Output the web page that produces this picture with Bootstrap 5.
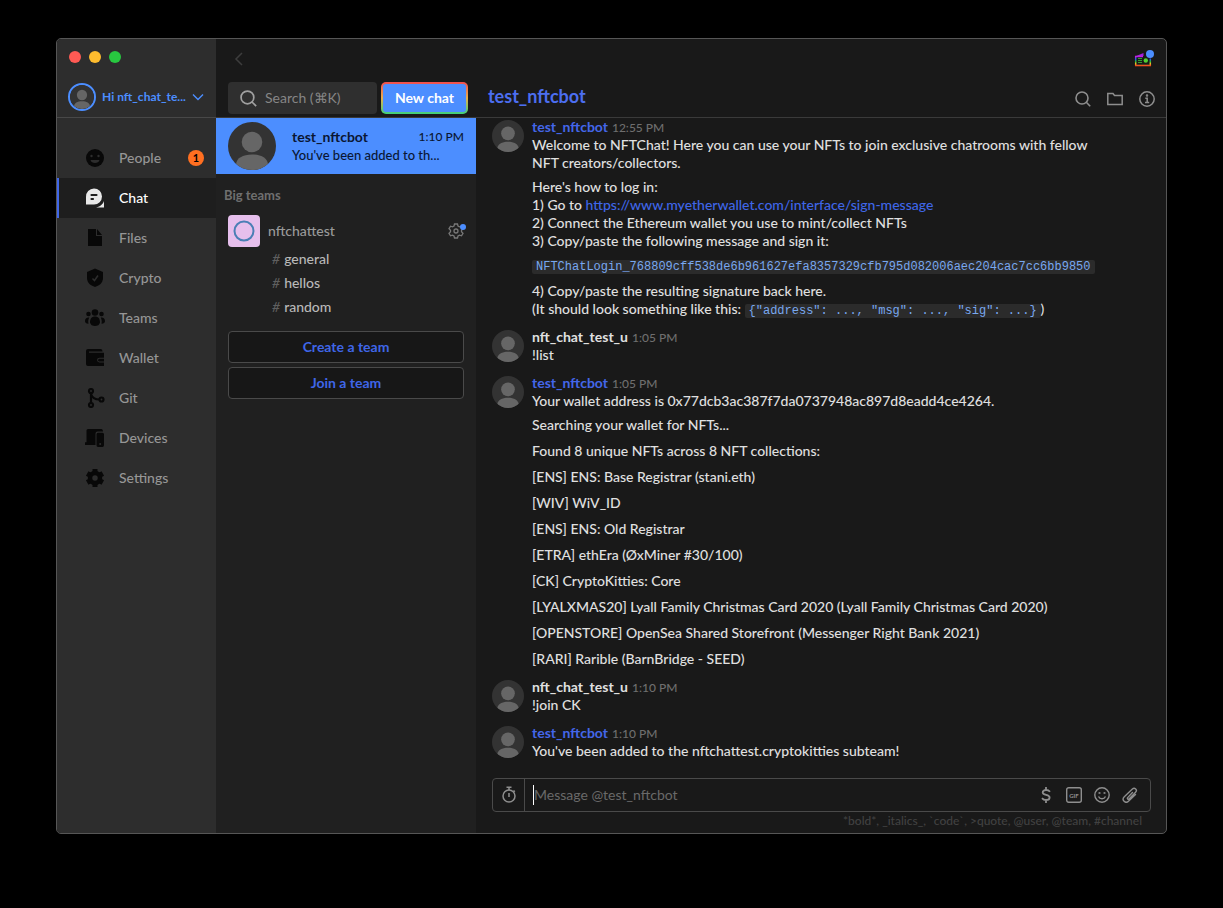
<!DOCTYPE html>
<html lang="en" data-bs-theme="dark">
<head>
<meta charset="utf-8">
<meta name="viewport" content="width=device-width, initial-scale=1">
<title>Chat – test_nftcbot</title>
<link href="https://cdn.jsdelivr.net/npm/bootstrap@5.3.0/dist/css/bootstrap.min.css" rel="stylesheet">
<style>
  :root { --blue: #4c8eff; --deep-blue: #3f66e8; --line: #3a3a3a; --ink: #e0e0e0; --muted: #6e6e6e; --panel: #191919; }
  body { background: #000; color: var(--ink); font: 500 14px/18px Lato, "Liberation Sans", sans-serif; padding: 38px 56px 74px; }
  a { text-decoration: none; }
  .app-window { border: 1px solid #565656; border-radius: 5px; background: var(--panel); }
  .icon-btn { background: none; border: 0; padding: 0; color: #8e8e8e; display: flex; }
  .defs { width: 0; height: 0; }

  /* Left navigation */
  .side { width: 159px; background: #2d2d2d; }
  .side-top { height: 79px; border-bottom: 1px solid #484848; padding: 12px 11px 0; }
  .dot { width: 12px; height: 12px; border-radius: 50%; }
  .dots { gap: 8px; margin-left: 1px; }
  .user-btn { color: var(--blue); font-size: 12px; font-weight: 700; margin-top: 20px; gap: 6px; line-height: 16px; }
  .me { width: 28px; height: 28px; border: 2px solid var(--blue); border-radius: 50%; }
  .side-nav { padding-top: 20px; }
  .side-nav a { height: 40px; color: #969696; font-weight: 500; padding: 0 12px 0 28px; gap: 14px; }
  .side-nav a svg { width: 20px; height: 20px; color: #080808; }
  .side-nav a.active { background: #1e1e1e; color: #fff; box-shadow: inset 2px 0 var(--deep-blue); }
  .side-nav a.active svg { color: #e8e8e8; }
  .count { width: 16px; height: 16px; border-radius: 50%; background: #ff6f21; color: #000; font-size: 11px; line-height: 16px; font-weight: 700; }

  /* Header */
  .top { height: 79px; border-bottom: 1px solid var(--line); }
  .list-col { width: 260px; }
  .title-strip { height: 39px; padding: 0 12px; }
  .find { background: #2f2f2f; border-radius: 4px; height: 32px; padding-left: 12px; gap: 8px; color: #a0a0a0; }
  .find input, .compose input { background: none; border: 0; outline: 0; color: var(--ink); min-width: 0; padding: 0; }
  .find input::placeholder { color: #868686; opacity: 1; }
  .new-chat { width: 87px; height: 32px; padding: 2px; border: 0; border-radius: 5px; background: linear-gradient(#f04e4e, #e8b04e 50%, #3ed07c); }
  .new-chat span { display: block; background: var(--blue); border-radius: 3px; color: #fff; font-weight: 700; line-height: 28px; }
  .room { font-size: 18px; line-height: 24px; font-weight: 700; color: #4c6ef0; }
  .head-tools { padding-right: 11px; padding-top: 2px; }

  /* Conversation list */
  .convs { background: #202020; }
  .conv-row { background: var(--blue); color: #0a1633; height: 56px; padding: 0 12px; gap: 16px; }
  .conv-row strong { font-weight: 700; }
  .conv-row time { font-size: 12px; }
  .conv-row .preview { font-size: 13px; }
  .section-name { color: #6f6f6f; font-size: 13px; line-height: 18px; font-weight: 700; margin: 12px 8px 0; }
  .team-row { margin: 11px 8px 0 12px; height: 32px; gap: 8px; color: #9a9a9a; }
  .team-logo { width: 32px; height: 32px; border-radius: 4px; background: #e6bfec; }
  .channels a { display: block; color: #b8b8b8; line-height: 24px; }
  .channels i { color: #5f5f5f; padding-right: 4px; }
  .team-btn { display: block; width: 100%; height: 32px; background: #171717; border: 1px solid #4a4a4a; border-radius: 4px; color: #3f66e8; font-weight: 700; }

  /* Thread */
  .thread { padding: 0 12px 0 16px; }
  .post { gap: 8px; margin-bottom: 10px; }
  .post > svg { width: 32px; height: 32px; margin-top: 2px; }
  .byline { display: flex; align-items: baseline; gap: 4px; height: 18px; }
  .who { font-weight: 700; color: var(--ink); }
  .bot { color: #4467ea; }
  .post time { font-size: 12px; color: var(--muted); }
  .post p { margin: 0 0 6px; }
  .post .loose p + p { margin-bottom: 8px; }
  .post p:last-child, .post .loose p:last-child { margin-bottom: 0; }
  .post a { color: #3f66e8; }
  .post code { font: 12px/14px "Liberation Mono", monospace; color: #79a8f0; background: #2b2b2b; border-radius: 2px; padding: 0 4px; white-space: nowrap; }
  .compose-wrap { padding: 0 15px 3px 16px; }
  .compose { height: 34px; border: 1px solid #4a4a4a; border-radius: 4px; }
  .timer { width: 32px; border-right: 1px solid #4a4a4a; }
  .compose .field { margin-left: 8px; border-left: 1px solid #fff; height: 20px; }
  .compose input::placeholder { color: #696969; opacity: 1; }
  .tools { gap: 12px; padding-right: 12px; }
  .hint { font-size: 12px; line-height: 18px; color: #414141; padding-right: 9px; }
</style>
</head>
<body class="vh-100 d-flex flex-column">
<svg class="defs position-absolute" aria-hidden="true">
  <clipPath id="disc"><circle cx="24" cy="24" r="24"/></clipPath>
  <symbol id="person" viewBox="0 0 48 48">
    <circle cx="24" cy="24" r="24" fill="#333"/>
    <g fill="#666" clip-path="url(#disc)"><circle cx="24" cy="20" r="10.3"/><path d="M8 48V43c0-7 7-10.500 16-10.500S40 36 40 43v5z"/></g>
  </symbol>
  <symbol id="lens" viewBox="0 0 16 16"><g fill="none" stroke="currentColor" stroke-width="1.600"><circle cx="7" cy="7" r="6"/><path d="M11.300 11.300l3.900 3.900"/></g></symbol>
</svg>

<div class="app-window flex-grow-1 d-flex overflow-hidden">
  <nav class="side flex-shrink-0" aria-label="Main">
    <div class="side-top">
      <div class="dots d-flex"><span class="dot" style="background:#ff5a54"></span><span class="dot" style="background:#febc2e"></span><span class="dot" style="background:#28c840"></span></div>
      <button class="icon-btn user-btn align-items-center">
        <svg class="me"><use href="#person"/></svg><span>Hi nft_chat_te...</span>
        <svg width="12" height="8" viewBox="0 0 12 8" fill="none" stroke="currentColor" stroke-width="1.400"><path d="M1 1.500l5 5 5-5"/></svg>
      </button>
    </div>
    <div class="side-nav nav flex-column flex-nowrap">
      <a href="#" class="d-flex align-items-center"><svg viewBox="0 0 20 20"><circle cx="10" cy="10" r="9" fill="currentColor"/><g fill="#2d2d2d"><circle cx="6.500" cy="8" r="1.200"/><circle cx="13.500" cy="8" r="1.200"/><path d="M5.500 12h9c-.6 2.200-2.400 3-4.500 3s-3.900-.8-4.500-3z"/></g></svg><span class="flex-grow-1">People</span><span class="count text-center">1</span></a>
      <a href="#" class="d-flex align-items-center active"><svg viewBox="0 0 20 20"><path fill="currentColor" d="M9 .5a8 8 0 1 1 0 16H1V9A8 8 0 0 1 9 .5zM19 13v6.500H9.500c4.500 0 8-2.500 9.500-6.500z"/><path fill="none" stroke="#1e1e1e" stroke-width="2.200" stroke-linecap="round" d="M6.500 7h5M6.500 11h1.500"/></svg>Chat</a>
      <a href="#" class="d-flex align-items-center"><svg viewBox="0 0 20 20"><path fill="currentColor" d="M3 1h8v7h6v10H3zM12 1l5 6h-5z"/></svg>Files</a>
      <a href="#" class="d-flex align-items-center"><svg viewBox="0 0 20 20"><path fill="currentColor" d="M10 .5l8 3.500v6c0 4.500-3.300 7.500-8 9-4.700-1.500-8-4.500-8-9V4z"/><path fill="none" stroke="#2d2d2d" stroke-width="1.500" d="M7.500 10.500l2 2 3.500-5"/></svg>Crypto</a>
      <a href="#" class="d-flex align-items-center"><svg viewBox="0 0 20 20" fill="currentColor"><circle cx="10" cy="4.500" r="3.300"/><circle cx="3.500" cy="6" r="2.300"/><circle cx="16.500" cy="6" r="2.300"/><path d="M5 14.500c0-4 1.800-6 5-6s5 2 5 6c-.5 2.500-2.500 3.500-5 3.500s-4.500-1-5-3.500zM4.200 9.500c-.9 2-1.200 4-.7 6.200C.7 15.500 0 14.500 0 13c0-2.300 1.600-3.800 4.200-3.500zM15.800 9.500c.9 2 1.200 4 .7 6.200 2.800-.2 3.500-1.200 3.500-2.700 0-2.300-1.600-3.800-4.200-3.500z"/></svg>Teams</a>
      <a href="#" class="d-flex align-items-center"><svg viewBox="0 0 20 20"><path fill="currentColor" d="M3 1h13q1.500 0 1.500 2.500H4v1.200h15v5h-4.500a2.300 2.300 0 0 0 0 4.800H19V18H3q-2 0-2-2V3q0-2 2-2z"/><path fill="currentColor" d="M14.500 10.800H19v2.700h-4.500a1.350 1.350 0 0 1 0-2.700z"/></svg>Wallet</a>
      <a href="#" class="d-flex align-items-center"><svg viewBox="0 0 20 20" fill="none" stroke="currentColor" stroke-width="2.200"><circle cx="6" cy="3" r="2"/><circle cx="6" cy="17" r="2"/><circle cx="16.500" cy="11.500" r="2"/><path d="M6 5v10M6 6c1 3.500 4 5.500 8.500 5.500"/></svg>Git</a>
      <a href="#" class="d-flex align-items-center"><svg viewBox="0 0 20 20" fill="currentColor"><path d="M1.500 2.500Q1.500 1 3 1h13.500q1.500 0 1.500 2.500h-5.500q-2 0-2 2V17H0q-1.500-2-.3-2.800h1.800zM13 4.800h4.500q1.500 0 1.500 1.500v11q0 1.700-1.500 1.700H13q-1.500 0-1.500-1.700v-11q0-1.500 1.500-1.500z"/><circle cx="15.200" cy="16" r="1" fill="#2d2d2d"/></svg>Devices</a>
      <a href="#" class="d-flex align-items-center"><svg viewBox="0 0 20 20" fill="none" stroke="currentColor"><circle cx="10" cy="10" r="5" stroke-width="4.500"/><g stroke-width="5"><path d="M10 1v3M10 16v3M2.200 5.500l2.600 1.500M15.200 13l2.600 1.500M2.200 14.500l2.600-1.500M15.200 7l2.600-1.500"/></g></svg>Settings</a>
    </div>
  </nav>

  <div class="flex-grow-1 d-flex flex-column overflow-hidden">
    <header class="top flex-shrink-0">
      <div class="title-strip d-flex align-items-center justify-content-between">
        <button class="icon-btn" aria-label="Back"><svg width="20" height="14" viewBox="0 0 20 14" fill="none" stroke="#3d3d3d" stroke-width="1.500"><path d="M14 1L8 7l6 6"/></svg></button>
        <button class="icon-btn" aria-label="News">
          <svg width="20" height="18" viewBox="0 0 20 18" fill="none"><defs><linearGradient id="rb" x1="0" y1="0" x2="0" y2="1"><stop stop-color="#c020e0"/><stop offset=".3" stop-color="#2058f0"/><stop offset=".55" stop-color="#20c040"/><stop offset=".8" stop-color="#f0c020"/><stop offset="1" stop-color="#f05020"/></linearGradient></defs>
            <path d="M1 6.500l8.500-3.500v3z" fill="#a020e0"/><path d="M9 6.500H1.700v9h14.600v-7" stroke="url(#rb)" stroke-width="1.500"/><path d="M4 8.500h4M4 10.500h4M4 12.500h4" stroke="#30a030"/><circle cx="11.800" cy="10.500" r="2.200" fill="#50d030"/><circle cx="16" cy="4" r="4" fill="#4c8eff"/></svg>
        </button>
      </div>
      <div class="d-flex align-items-center pt-1">
        <div class="list-col d-flex flex-shrink-0 gap-1 ps-2 pe-2">
          <label class="find d-flex align-items-center flex-grow-1 ms-1"><svg class="flex-shrink-0" width="17" height="17"><use href="#lens"/></svg><input class="w-100" type="search" placeholder="Search (⌘K)"></label>
          <button class="new-chat flex-shrink-0"><span>New chat</span></button>
        </div>
        <h1 class="room flex-grow-1 mb-1 ms-2 ps-1">test_nftcbot</h1>
        <div class="head-tools d-flex gap-3">
          <button class="icon-btn" aria-label="Search"><svg width="16" height="16"><use href="#lens"/></svg></button>
          <button class="icon-btn" aria-label="Files"><svg width="16" height="16" viewBox="0 0 16 16" fill="none" stroke="currentColor" stroke-width="1.500"><path d="M.8 13.500v-11H6L7.500 4.500h7.700v9z"/></svg></button>
          <button class="icon-btn" aria-label="Info"><svg width="16" height="16" viewBox="0 0 16 16" fill="none" stroke="currentColor" stroke-width="1.500"><circle cx="8" cy="8" r="7.200"/><path d="M6.300 7.200H8.200v4M6 11.500h4.200" /><circle cx="8" cy="4.600" r=".5"/></svg></button>
        </div>
      </div>
    </header>

    <div class="flex-grow-1 d-flex overflow-hidden">
      <aside class="list-col convs flex-shrink-0">
        <a href="#" class="conv-row d-flex align-items-center">
          <svg class="flex-shrink-0" width="48" height="48"><use href="#person"/></svg>
          <div class="flex-grow-1"><div class="d-flex justify-content-between"><strong>test_nftcbot</strong><time>1:10 PM</time></div><div class="preview">You've been added to th...</div></div>
        </a>
        <h2 class="section-name">Big teams</h2>
        <div class="team-row d-flex align-items-center">
          <svg class="team-logo" viewBox="0 0 32 32"><circle cx="16" cy="16" r="9.500" fill="none" stroke="#4a7fb5" stroke-width="2"/></svg>
          <span class="flex-grow-1">nftchattest</span>
          <button class="icon-btn" aria-label="Team settings"><svg width="20" height="18" viewBox="0 0 20 18" fill="none"><g stroke="#777" stroke-width="1.300"><path d="M6.500 2h3l.5 2 1.500.8 2-.6 1.500 2.500-1.500 1.500v1.600l1.500 1.500-1.500 2.500-2-.6L10 14l-.5 2h-3L6 14l-1.500-.8-2 .6L1 11.300l1.500-1.500V8.200L1 6.700l1.500-2.500 2 .6L6 4z"/><circle cx="8" cy="9" r="2"/></g><circle cx="15" cy="5" r="3" fill="#4c8eff"/></svg></button>
        </div>
        <div class="channels ps-5"><div class="ps-2"><a href="#"><i>#</i>general</a><a href="#"><i>#</i>hellos</a><a href="#"><i>#</i>random</a></div></div>
        <div class="d-flex flex-column gap-1 px-2 mx-1 pt-2 mt-1"><button class="team-btn">Create a team</button><button class="team-btn">Join a team</button></div>
      </aside>

      <main class="flex-grow-1 d-flex flex-column overflow-hidden">
        <div class="thread flex-grow-1 overflow-hidden">
          <article class="post d-flex"><svg class="flex-shrink-0"><use href="#person"/></svg><div>
            <div class="byline"><span class="who bot">test_nftcbot</span><time>12:55 PM</time></div>
            <p>Welcome to NFTChat! Here you can use your NFTs to join exclusive chatrooms with fellow<br>NFT creators/collectors.</p>
            <p>Here's how to log in:<br>1) Go to <a href="#">https://www.myetherwallet.com/interface/sign-message</a><br>2) Connect the Ethereum wallet you use to mint/collect NFTs<br>3) Copy/paste the following message and sign it:</p>
            <p class="mb-2"><code>NFTChatLogin_768809cff538de6b961627efa8357329cfb795d082006aec204cac7cc6bb9850</code></p>
            <p>4) Copy/paste the resulting signature back here.<br>(It should look something like this: <code>{"address": ..., "msg": ..., "sig": ...}</code>)</p>
          </div></article>
          <article class="post d-flex"><svg class="flex-shrink-0"><use href="#person"/></svg><div>
            <div class="byline"><span class="who">nft_chat_test_u</span><time>1:05 PM</time></div><p>!list</p></div></article>
          <article class="post d-flex"><svg class="flex-shrink-0"><use href="#person"/></svg><div class="loose">
            <div class="byline"><span class="who bot">test_nftcbot</span><time>1:05 PM</time></div>
            <p>Your wallet address is 0x77dcb3ac387f7da0737948ac897d8eadd4ce4264.</p>
            <p>Searching your wallet for NFTs...</p>
            <p>Found 8 unique NFTs across 8 NFT collections:</p>
            <p>[ENS] ENS: Base Registrar (stani.eth)</p>
            <p>[WIV] WiV_ID</p>
            <p>[ENS] ENS: Old Registrar</p>
            <p>[ETRA] ethEra (ØxMiner #30/100)</p>
            <p>[CK] CryptoKitties: Core</p>
            <p>[LYALXMAS20] Lyall Family Christmas Card 2020 (Lyall Family Christmas Card 2020)</p>
            <p>[OPENSTORE] OpenSea Shared Storefront (Messenger Right Bank 2021)</p>
            <p>[RARI] Rarible (BarnBridge - SEED)</p>
          </div></article>
          <article class="post d-flex"><svg class="flex-shrink-0"><use href="#person"/></svg><div>
            <div class="byline"><span class="who">nft_chat_test_u</span><time>1:10 PM</time></div><p>!join CK</p></div></article>
          <article class="post d-flex"><svg class="flex-shrink-0"><use href="#person"/></svg><div>
            <div class="byline"><span class="who bot">test_nftcbot</span><time>1:10 PM</time></div><p>You've been added to the nftchattest.cryptokitties subteam!</p></div></article>
        </div>
        <div class="compose-wrap">
          <div class="compose d-flex align-items-center">
            <button class="icon-btn timer align-self-stretch align-items-center justify-content-center" aria-label="Timer"><svg width="16" height="18" viewBox="0 0 16 18" fill="none" stroke="currentColor" stroke-width="1.500"><circle cx="8" cy="10" r="6"/><path d="M8 7v4M5.500 1.200h5M8 1v3M12.500 4.500l1.300 1.300"/></svg></button>
            <label class="field d-flex align-items-center flex-grow-1"><input class="w-100" type="text" placeholder="Message @test_nftcbot" aria-label="Message"></label>
            <div class="tools d-flex">
              <button class="icon-btn" aria-label="Send money"><svg width="16" height="16" viewBox="0 0 16 16" fill="none" stroke="currentColor" stroke-width="1.800"><path d="M12 4.800C11 3.500 9.500 3 8 3 6 3 4.700 4 4.700 5.400c0 3.200 6.900 1.800 6.900 5C11.600 12 10 13 8 13c-1.600 0-3-.6-4-1.900M8 0v3M8 13v3"/></svg></button>
              <button class="icon-btn" aria-label="GIF"><svg width="16" height="16" viewBox="0 0 16 16"><rect x=".7" y=".7" width="14.600" height="14.600" rx="2" fill="none" stroke="currentColor" stroke-width="1.400"/><text x="8" y="10.500" text-anchor="middle" font-size="6" font-weight="700" fill="currentColor">GIF</text></svg></button>
              <button class="icon-btn" aria-label="Emoji"><svg width="16" height="16" viewBox="0 0 16 16" fill="none" stroke="currentColor" stroke-width="1.400"><circle cx="8" cy="8" r="7.200"/><path d="M4.500 9.500c1.500 3 5.500 3 7 0"/><circle cx="5.500" cy="6" r=".4"/><circle cx="10.500" cy="6" r=".4"/></svg></button>
              <button class="icon-btn" aria-label="Attach"><svg width="16" height="16" viewBox="0 0 16 16" fill="none" stroke="currentColor" stroke-width="1.400" stroke-linecap="round"><path d="M10.500 5.500L5.700 10.600c-.9 1 .4 2.200 1.300 1.300l6.600-6.700c2.200-2.300-1-5.300-3.200-3.200L2.300 9.700c-3.200 3.200 1.200 7.600 4.400 4.400L13.500 7.500"/></svg></button>
            </div>
          </div>
          <div class="hint text-end">*bold*, _italics_, `code`, &gt;quote, @user, @team, #channel</div>
        </div>
      </main>
    </div>
  </div>
</div>
<script src="https://cdn.jsdelivr.net/npm/bootstrap@5.3.0/dist/js/bootstrap.bundle.min.js"></script>
</body>
</html>
